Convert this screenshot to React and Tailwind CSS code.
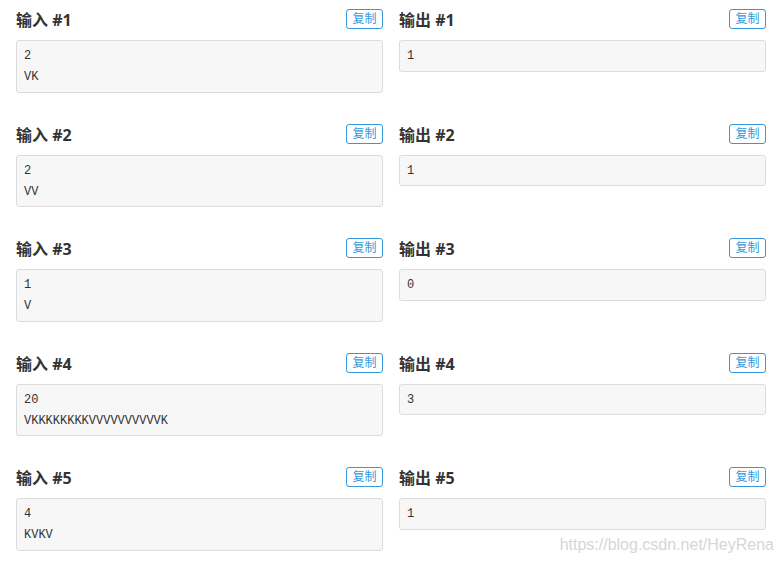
const samples = [
  { id: 1, input: ['2', 'VK'], output: ['1'] },
  { id: 2, input: ['2', 'VV'], output: ['1'] },
  { id: 3, input: ['1', 'V'], output: ['0'] },
  { id: 4, input: ['20', 'VKKKKKKKKVVVVVVVVVVK'], output: ['3'] },
  { id: 5, input: ['4', 'KVKV'], output: ['1'] },
];

const SampleBlock = ({ title, lines }) => (
  <div className="flex-1 min-w-0">
    {/* header: title + copy button */}
    <div className="flex items-center justify-between h-[20px] mb-[11px]">
      <h3 className="text-[16px] font-bold text-[#333] leading-none pt-[2px]">{title}</h3>
      <button className="h-[20px] w-[37px] border border-[#3498db] rounded-[3px] text-[12px] leading-none text-[#3498db] bg-white">
        复制
      </button>
    </div>
    <pre className="bg-[#f7f7f7] border border-[#dcdcdc] rounded-[3px] px-[7px] pt-[5px] pb-[3.5px] text-[12px] leading-[21px] text-[#333] font-['Liberation_Mono','Courier_New',monospace]">
      {lines.join('\n')}
    </pre>
  </div>
);

export default function App() {
  return (
    <div className="relative w-[783px] h-[563px] bg-white overflow-hidden font-['Open_Sans','Noto_Sans_CJK_SC',sans-serif]">
      <div className="flex flex-col gap-[31px] pt-[9px] pl-[16px] pr-[17px]">
        {samples.map((s) => (
          <div key={s.id} className="flex items-start gap-[16px]">
            <SampleBlock title={`输入 #${s.id}`} lines={s.input} />
            <SampleBlock title={`输出 #${s.id}`} lines={s.output} />
          </div>
        ))}
      </div>

      {/* watermark */}
      <div className="absolute right-[9px] bottom-[10px] text-[16px] text-[#d6d6d6] font-['Liberation_Sans',sans-serif] leading-none">
        https://blog.csdn.net/HeyRena
      </div>
    </div>
  );
}
